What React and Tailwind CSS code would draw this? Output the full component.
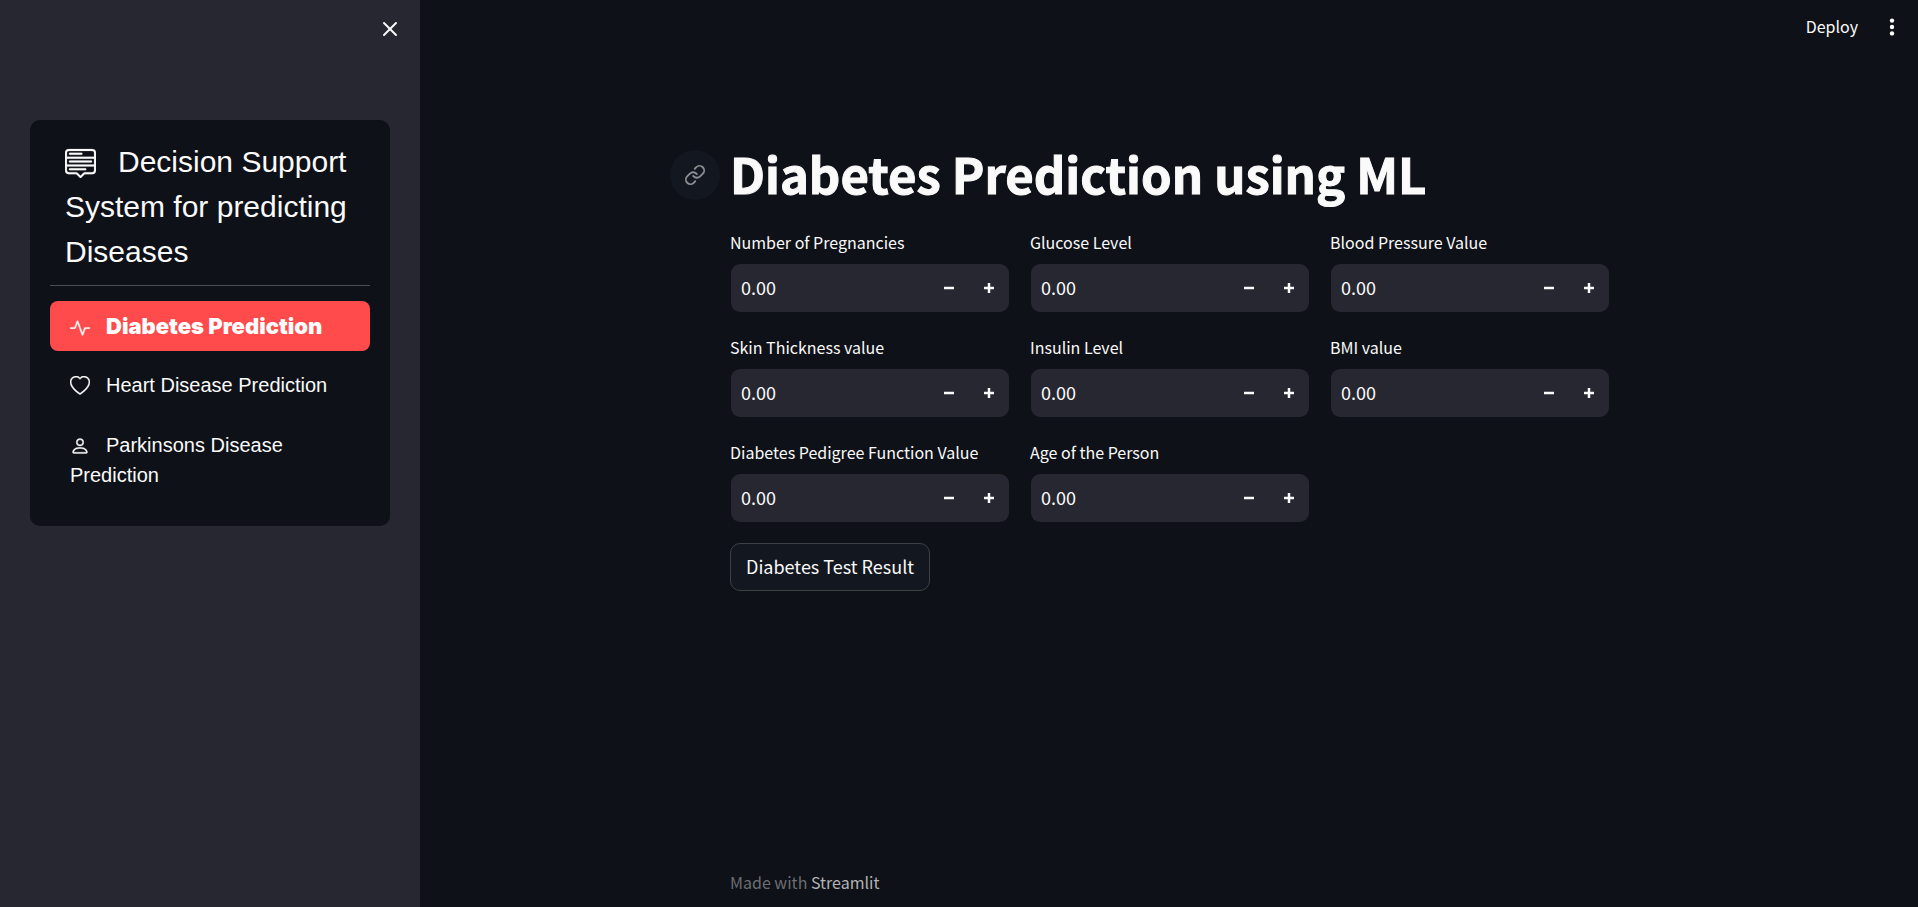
import { useState } from "react";
import { BsActivity, BsHeart, BsMenuUp, BsPerson } from "react-icons/bs";
import { Link as LinkIcon, X } from "lucide-react";

const NAV_ITEMS = [
  { label: "Diabetes Prediction", Icon: BsActivity },
  { label: "Heart Disease Prediction", Icon: BsHeart },
  { label: "Parkinsons Disease Prediction", Icon: BsPerson },
];

const FIELDS = [
  { id: "pregnancies", label: "Number of Pregnancies" },
  { id: "glucose", label: "Glucose Level" },
  { id: "blood-pressure", label: "Blood Pressure Value" },
  { id: "skin-thickness", label: "Skin Thickness value" },
  { id: "insulin", label: "Insulin Level" },
  { id: "bmi", label: "BMI value" },
  { id: "pedigree", label: "Diabetes Pedigree Function Value" },
  { id: "age", label: "Age of the Person" },
];

function Sidebar() {
  const [active, setActive] = useState(0);
  return (
    <aside className="flex w-[420px] shrink-0 flex-col bg-[#262730] px-[30px]">
      <div className="-mr-3 flex h-[120px] items-start justify-end pt-[17px]">
        <button type="button" aria-label="Close sidebar" className="flex size-6 items-center justify-center">
          <X className="size-6" strokeWidth={2} />
        </button>
      </div>
      <nav className="rounded-[10px] bg-[#0e1117] px-5 pt-[19px] pb-[25px] font-['Liberation_Sans',Arial,sans-serif] text-[#fafafa]">
        <h2 className="px-[15px] pb-[11px] text-[30px] leading-[45px]">
          <BsMenuUp className="mr-[22px] inline size-[31px] align-[-6px]" strokeWidth={0.1} />
          Decision Support System for predicting Diseases
        </h2>
        <hr className="mb-[15px] border-t border-[#4b4d52]" />
        <ul className="flex flex-col gap-[10px]">
          {NAV_ITEMS.map(({ label, Icon }, i) => (
            <li key={label}>
              <a
                href="#"
                onClick={(e) => {
                  e.preventDefault();
                  setActive(i);
                }}
                className={
                  i === active
                    ? "block rounded-[8px] bg-[#ff4b4b] px-5 py-[10px] font-['Inter',sans-serif] text-[22px] leading-[30px] font-black text-white"
                    : "block rounded-[8px] px-5 pt-[9px] pb-[11px] text-[20px] leading-[30px]"
                }
              >
                <Icon className="mr-4 inline size-5 align-[-4px]" strokeWidth={0.3} />
                {label}
              </a>
            </li>
          ))}
        </ul>
      </nav>
    </aside>
  );
}

function NumberField({ id, label }) {
  const [value, setValue] = useState("0.00");
  const step = (delta) => setValue((v) => ((Number(v) || 0) + delta).toFixed(2));
  return (
    <div className="flex flex-col">
      <label htmlFor={id} className="mb-[7px] text-[16px] leading-7 whitespace-nowrap">
        {label}
      </label>
      <div className="flex h-[50px] overflow-hidden rounded-[10px] border border-transparent bg-[#262730] bg-clip-padding">
        <input
          id={id}
          type="text"
          inputMode="decimal"
          value={value}
          onChange={(e) => setValue(e.target.value)}
          className="min-w-0 flex-1 bg-transparent px-[10px] pb-[2px] text-[18px] leading-7 outline-none"
        />
        <button type="button" aria-label={`Decrease ${label}`} onClick={() => step(-0.01)} className="flex w-10 items-center justify-center">
          <svg viewBox="0 0 8 8" className="size-[10px]" fill="currentColor">
            <path d="M0 3v2h8v-2h-8z" />
          </svg>
        </button>
        <button type="button" aria-label={`Increase ${label}`} onClick={() => step(0.01)} className="flex w-10 items-center justify-center">
          <svg viewBox="0 0 8 8" className="size-[10px]" fill="currentColor">
            <path d="M3 0v3h-3v2h3v3h2v-3h3v-2h-3v-3h-2z" />
          </svg>
        </button>
      </div>
    </div>
  );
}

export default function App() {
  return (
    <div className="flex min-h-screen bg-[#0e1117] font-['Noto_Sans_CJK_SC',sans-serif] text-[#fafafa]">
      <Sidebar />
      <div className="flex min-w-0 flex-1 flex-col">
        <header className="flex h-[54px] items-center justify-end gap-7 pr-5">
          <button type="button" className="pb-[2px] text-[16px] leading-6">
            Deploy
          </button>
          <button type="button" aria-label="Main menu" className="flex w-3 justify-center">
            <svg viewBox="0 0 6 18" className="h-[18px] w-[6px]" fill="currentColor">
              <circle cx="3" cy="2.6" r="2.2" />
              <circle cx="3" cy="9" r="2.2" />
              <circle cx="3" cy="15.4" r="2.2" />
            </svg>
          </button>
        </header>
        <main className="mx-auto w-full max-w-[922px] flex-1 pt-[88px] pr-5 pl-[22px]">
          <div className="relative">
            <a
              href="#diabetes-prediction-using-ml"
              aria-label="Link to heading"
              className="absolute top-2 right-full mr-[10px] flex size-[50px] items-center justify-center rounded-full bg-[#13171f] text-[#8d8e92]"
            >
              <LinkIcon className="size-[22px]" strokeWidth={2} />
            </a>
            <h1 id="diabetes-prediction-using-ml" className="pb-6 text-[49px] leading-[62px] font-bold [-webkit-text-stroke:1px_#fafafa]">
              Diabetes Prediction using ML
            </h1>
          </div>
          <form onSubmit={(e) => e.preventDefault()}>
            <div className="grid grid-cols-3 gap-5">
              {FIELDS.map((field) => (
                <NumberField key={field.id} {...field} />
              ))}
            </div>
            <button type="submit" className="mt-5 h-12 rounded-[10px] border border-[#3d4045] bg-[#13171f] px-[15px] pb-[2px] text-[18px] leading-7">
              Diabetes Test Result
            </button>
          </form>
        </main>
        <footer className="mx-auto w-full max-w-[922px] pr-5 pb-[13px] pl-[22px] text-[16px] leading-6 text-[#6c6e72]">
          Made with{" "}
          <a href="#" className="text-[#b3b4b6]">
            Streamlit
          </a>
        </footer>
      </div>
    </div>
  );
}
